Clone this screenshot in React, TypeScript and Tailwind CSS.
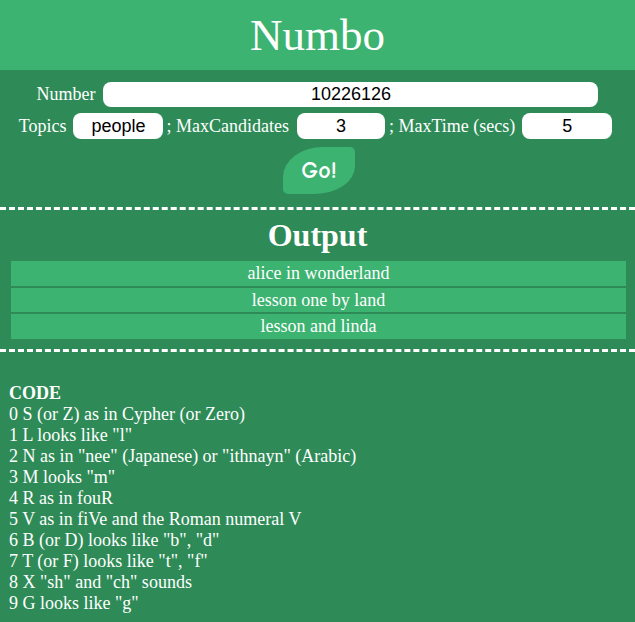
import React from 'react';

const codes = [
  '0 S (or Z) as in Cypher (or Zero)',
  '1 L looks like "l"',
  '2 N as in "nee" (Japanese) or "ithnayn" (Arabic)',
  '3 M looks "m"',
  '4 R as in fouR',
  '5 V as in fiVe and the Roman numeral V',
  '6 B (or D) looks like "b", "d"',
  '7 T (or F) looks like "t", "f"',
  '8 X "sh" and "ch" sounds',
  '9 G looks like "g"',
];

function Field({ value, className }: { value: string; className: string }) {
  return (
    <input
      readOnly
      value={value}
      className={`block rounded-lg border-0 bg-white p-0 text-center font-['Liberation_Sans',Arial,sans-serif] text-[18px] leading-[21px] text-black outline-none ${className}`}
    />
  );
}

function Dashes() {
  return <div className="w-full border-t-[3px] border-dashed border-white" />;
}

export default function App() {
  return (
    <div className="min-h-screen bg-[#2e8b57] font-['Liberation_Serif','Times_New_Roman',serif] text-[18px] leading-[21px] text-white">
      <header className="h-[70px] bg-[#3cb371] pt-[10px] text-center">
        <h1 className="text-[45px] leading-[50px]">Numbo</h1>
      </header>

      <section className="flex flex-col items-center">
        <div className="mt-[12px] flex h-[25px] items-center">
          <span>Number</span>
          <Field value="10226126" className="ml-[8px] h-[25px] w-[495px]" />
        </div>

        <div className="mr-[4px] mt-[6px] flex h-[26px] items-center">
          <span>Topics</span>
          <Field value="people" className="ml-[7px] mr-[3px] h-[26px] w-[90px]" />
          <span>; MaxCandidates</span>
          <Field value="3" className="ml-[8px] mr-[4px] h-[26px] w-[88px]" />
          <span>; MaxTime (secs)</span>
          <Field value="5" className="ml-[7px] h-[26px] w-[90px]" />
        </div>

        <button className="ml-[3px] mt-[8px] flex h-[47px] w-[72px] items-center justify-center rounded-tl-[40px_30px] rounded-tr-[5px] rounded-br-[40px_28px] rounded-bl-[5px] bg-[#3cb371] font-['Comic_Sans_MS','Comic_Neue',cursive] text-[24px] font-semibold text-white">
          Go!
        </button>
      </section>

      <div className="mt-[13px] h-[3px]">
        <Dashes />
      </div>

      <section>
        <h2 className="mt-[7px] text-center text-[32px] font-bold leading-[36px]">Output</h2>
        <div className="ml-[11px] mr-[9px] mt-[8px] flex flex-col gap-[2px]">
          <div className="flex h-[25px] items-center justify-center bg-[#3cb371]">alice in wonderland</div>
          <div className="flex h-[24px] items-center justify-center bg-[#3cb371]">lesson one by land</div>
          <div className="flex h-[25px] items-center justify-center bg-[#3cb371]">lesson and linda</div>
        </div>
      </section>

      <div className="mt-[10px] h-[3px]">
        <Dashes />
      </div>

      <section className="mt-[31px] pb-4 pl-[9px]">
        <div className="font-bold">CODE</div>
        {codes.map((line) => (
          <div key={line}>{line}</div>
        ))}
      </section>
    </div>
  );
}
